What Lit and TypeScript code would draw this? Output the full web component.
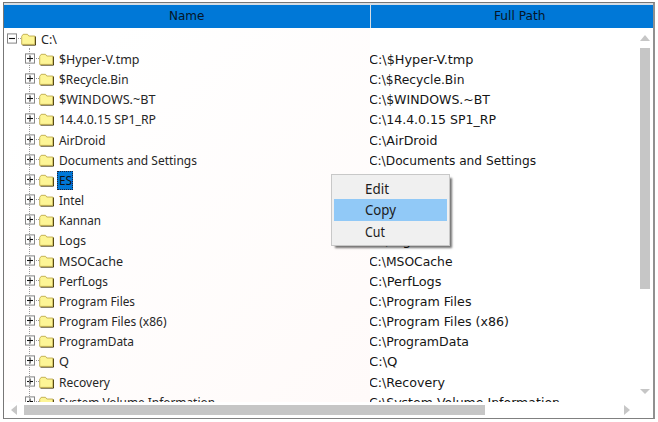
import { LitElement, html, css, svg } from "lit";
import { customElement, property } from "lit/decorators.js";
import { classMap } from "lit/directives/class-map.js";

interface Entry { name: string; left: number; right: number; }

// Widths are the rendered label widths in the name and path columns.
const entries: Entry[] = [
  { name: "$Hyper-V.tmp", left: 80.5, right: 104.5 },
  { name: "$Recycle.Bin", left: 69.5, right: 95.5 },
  { name: "$WINDOWS.~BT", left: 96.5, right: 121 },
  { name: "14.4.0.15 SP1_RP", left: 97, right: 127 },
  { name: "AirDroid", left: 46.5, right: 68.5 },
  { name: "Documents and Settings", left: 138, right: 167 },
  { name: "ES", left: 13, right: 36 },
  { name: "Intel", left: 25, right: 48 },
  { name: "Kannan", left: 42, right: 66 },
  { name: "Logs", left: 27, right: 49 },
  { name: "MSOCache", left: 64, right: 83.5 },
  { name: "PerfLogs", left: 49, right: 72.5 },
  { name: "Program Files", left: 76, right: 102.5 },
  { name: "Program Files (x86)", left: 107.5, right: 140 },
  { name: "ProgramData", left: 75, right: 100 },
  { name: "Q", left: 10, right: 28.5 },
  { name: "Recovery", left: 51, right: 76 },
  { name: "System Volume Information", left: 156, right: 191 },
];

@customElement("fit-label")
class FitLabel extends LitElement {
  @property() text = "";
  @property({ type: Number }) width = 0;
  static styles = css`
    :host { display: inline-block; white-space: pre; line-height: 20px; }
    svg { display: block; height: 20px; overflow: visible; }
    text { fill: currentColor; }
  `;
  render() {
    return html`<svg width=${this.width} height="20">
      ${svg`<text x="0" y="14.3" textLength=${this.width} lengthAdjust="spacingAndGlyphs">${this.text}</text>`}
    </svg>`;
  }
}

@customElement("tree-icons")
class TreeIcons extends LitElement {
  @property({ type: Boolean }) open = false;
  static styles = css`:host { display: block; width: 30px; height: 20px; } svg { display: block; overflow: visible; }`;
  render() {
    return html`<svg width="30" height="20" viewBox="0 0 30 20">
      <rect x="0.5" y="3.9" width="9" height="9.2" fill="#fff" stroke="#858585"></rect>
      <path d="M2 8.5h6" stroke="#111" stroke-width="1.1"></path>
      ${this.open ? "" : svg`<path d="M5 5.5v6" stroke="#111" stroke-width="1.1"></path>`}
      <path d="M11 8.5h3" stroke="#999" stroke-dasharray="1 1"></path>
      <path d="M15.5 15.1h13V6.5" fill="none" stroke="#3a3008" stroke-width="1"></path>
      <path d="M14.7 14.4V6.3l1.5-2h4.3L21.8 6h6v8.4z" fill="#fdf596" stroke="#b8a13c" stroke-width=".8"></path>
    </svg>`;
  }
}

@customElement("app-root")
class AppRoot extends LitElement {
  static styles = css`
    :host { display: block; width: 658px; height: 422px; background: #fff; overflow: hidden; position: relative; }
    * { box-sizing: border-box; }
    .frame {
      margin: 2px 0 0 3px; width: 652px; height: 417px; display: flex; flex-direction: column;
      border: 1px solid #777; border-right: 2px solid #909090; border-bottom-color: #808080; background: #fff;
    }
    .head { display: grid; grid-template-columns: 366px 1fr; gap: 1px; height: 25px; padding-top: 2px;
      background: #d5dde4; font: 11.5px "DejaVu Sans", sans-serif; color: #051527; }
    .head div { background: #0078d7; display: flex; justify-content: center; padding-top: 1px; }
    .head div:first-child { padding-right: 1px; }
    .head div:last-child { padding-left: 15px; }
    .body { position: relative; display: grid; grid-template-columns: 366px 270px 1fr; height: 374px; overflow: hidden; }
    .names { background: linear-gradient(135deg, #fff 15%, #fffaf9 100%); overflow: hidden; height: 374px;
      position: relative; font: 12.2px "Noto Sans", sans-serif; color: #262626; }
    .paths { padding-top: 22px; margin-left: -.6px; overflow: hidden; height: 374px; font: 11.5px "DejaVu Sans", sans-serif; color: #151515; }
    .row { display: flex; height: 20.17px; padding-left: 21px; align-items: flex-start; }
    .root { padding-left: 3px; height: 22px; padding-top: 2px; }
    .names fit-label { margin-left: 4px; }
    .paths fit-label { display: block; height: 20.17px; }
    .names .selected { background: #0078d7; color: #111; outline: 1px dotked #223; outline: 1px dotted #223; outline-offset: -1px;
      margin-left: 2px; padding: 0 1px 0 2px; height: 19px; }
    .guide { position: absolute; left: 25px; top: 20px; bottom: 0; border-left: 1px dotted #999; }
    .vbar { display: flex; flex-direction: column; padding-top: 7px; }
    .vbar svg, .hbar svg { display: block; fill: #c6c6c6; }
    .vthumb { width: 10px; height: 241px; margin: 7px 0 100px; background: #c6c6c6; }
    .hbar { display: flex; align-items: center; height: 15px; padding: 0 0 0 7px; }
    .hthumb { width: 461px; height: 10px; margin: 0 139px 0 7px; background: #c6c6c6; }
    .menu { position: absolute; left: 331px; top: 174px; width: 119px; height: 72px; padding: 3px 2px;
      background: #f0f0f0; border: 1px solid #c8c8c8; box-shadow: 3px 3px 2px -1px rgba(0,0,0,.55);
      font: 14px "Noto Sans", sans-serif; color: #1c1c1c; }
    .item { height: 22px; padding: 1px 0 0 31px; }
    .item fit-label { position: relative; top: .7px; }
    .item:first-child { height: 21px; }
    .hot { background: #91c9f7; }
  `;
  render() {
    return html`
      <div class="frame">
        <div class="head">
          <div><fit-label text="Name" width="35.5"></fit-label></div>
          <div><fit-label text="Full Path" width="51.5"></fit-label></div>
        </div>
        <div class="body">
          <div class="names">
            <div class="guide"></div>
            <div class="row root"><tree-icons open></tree-icons><fit-label text="C:\\" width="16"></fit-label></div>
            ${entries.map(e => html`<div class="row"><tree-icons></tree-icons>
              <fit-label class=${classMap({ selected: e.name === "ES" })} text=${e.name} width=${e.left}></fit-label></div>`)}
          </div>
          <div class="paths">
            ${entries.map(e => html`<fit-label text=${"C:\\" + e.name} width=${e.right}></fit-label>`)}
          </div>
          <div class="vbar">
            <svg width="10" height="6"><path d="M0 6L5 0L10 6z"></path></svg>
            <div class="vthumb"></div>
            <svg width="10" height="5"><path d="M0 0h10L5 5z"></path></svg>
          </div>
        </div>
        <div class="hbar">
          <svg width="6" height="10"><path d="M6 0v10L0 5z"></path></svg>
          <div class="hthumb"></div>
          <svg width="6" height="10"><path d="M0 0v10l6-5z"></path></svg>
        </div>
      </div>
      <div class="menu">
        <div class="item"><fit-label text="Edit" width="24"></fit-label></div>
        <div class="item hot"><fit-label text="Copy" width="31"></fit-label></div>
        <div class="item"><fit-label text="Cut" width="20"></fit-label></div>
      </div>`;
  }
}
